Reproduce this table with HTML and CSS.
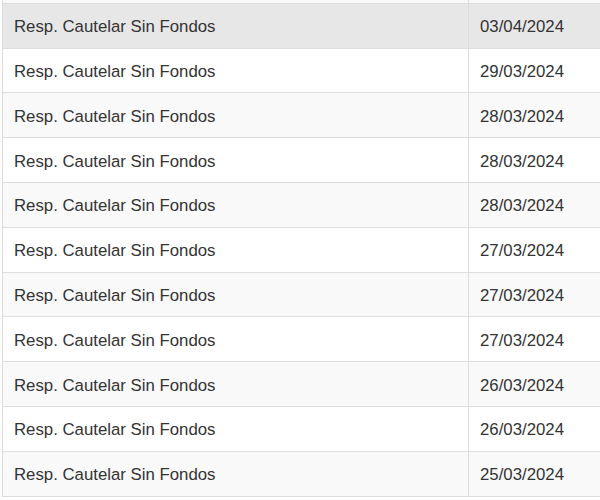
FILE: index.html
```html
<!DOCTYPE html>
<html>
<head>
<meta charset="utf-8">
<link rel="stylesheet" href="styles.css">
</head>
<body>
<div class="table">
  <div class="row row-top"><div class="cell name"></div><div class="cell date"></div></div>
  <div class="row hover"><div class="cell name">Resp. Cautelar Sin Fondos</div><div class="cell date">03/04/2024</div></div>
  <div class="row"><div class="cell name">Resp. Cautelar Sin Fondos</div><div class="cell date">29/03/2024</div></div>
  <div class="row striped"><div class="cell name">Resp. Cautelar Sin Fondos</div><div class="cell date">28/03/2024</div></div>
  <div class="row"><div class="cell name">Resp. Cautelar Sin Fondos</div><div class="cell date">28/03/2024</div></div>
  <div class="row striped"><div class="cell name">Resp. Cautelar Sin Fondos</div><div class="cell date">28/03/2024</div></div>
  <div class="row"><div class="cell name">Resp. Cautelar Sin Fondos</div><div class="cell date">27/03/2024</div></div>
  <div class="row striped"><div class="cell name">Resp. Cautelar Sin Fondos</div><div class="cell date">27/03/2024</div></div>
  <div class="row"><div class="cell name">Resp. Cautelar Sin Fondos</div><div class="cell date">27/03/2024</div></div>
  <div class="row striped"><div class="cell name">Resp. Cautelar Sin Fondos</div><div class="cell date">26/03/2024</div></div>
  <div class="row"><div class="cell name">Resp. Cautelar Sin Fondos</div><div class="cell date">26/03/2024</div></div>
  <div class="row striped"><div class="cell name">Resp. Cautelar Sin Fondos</div><div class="cell date">25/03/2024</div></div>
</div>
</body>
</html>
```
FILE: styles.css
```css
html, body {
  margin: 0;
  padding: 0;
  background: #ffffff;
  overflow: hidden;
}
body {
  font-family: "Liberation Sans", Arial, Helvetica, sans-serif;
  font-size: 16.8px;
  color: #333333;
}
.table {
  margin-left: 2px;
  margin-top: -41px;
  width: 598px;
  border-left: 1px solid #dddddd;
}
.row {
  display: grid;
  grid-template-columns: 466px 1fr;
  height: 44.8px;
  box-sizing: border-box;
  border-bottom: 1px solid #dddddd;
}
.row-top {
  background: #f9f9f9;
}
.striped {
  background: #f9f9f9;
}
.hover {
  background: #e8e7e8;
}
.cell {
  display: flex;
  align-items: center;
  padding-left: 11px;
  padding-top: 3px;
  white-space: nowrap;
}
.name {
  border-right: 1px solid #dddddd;
}
```
